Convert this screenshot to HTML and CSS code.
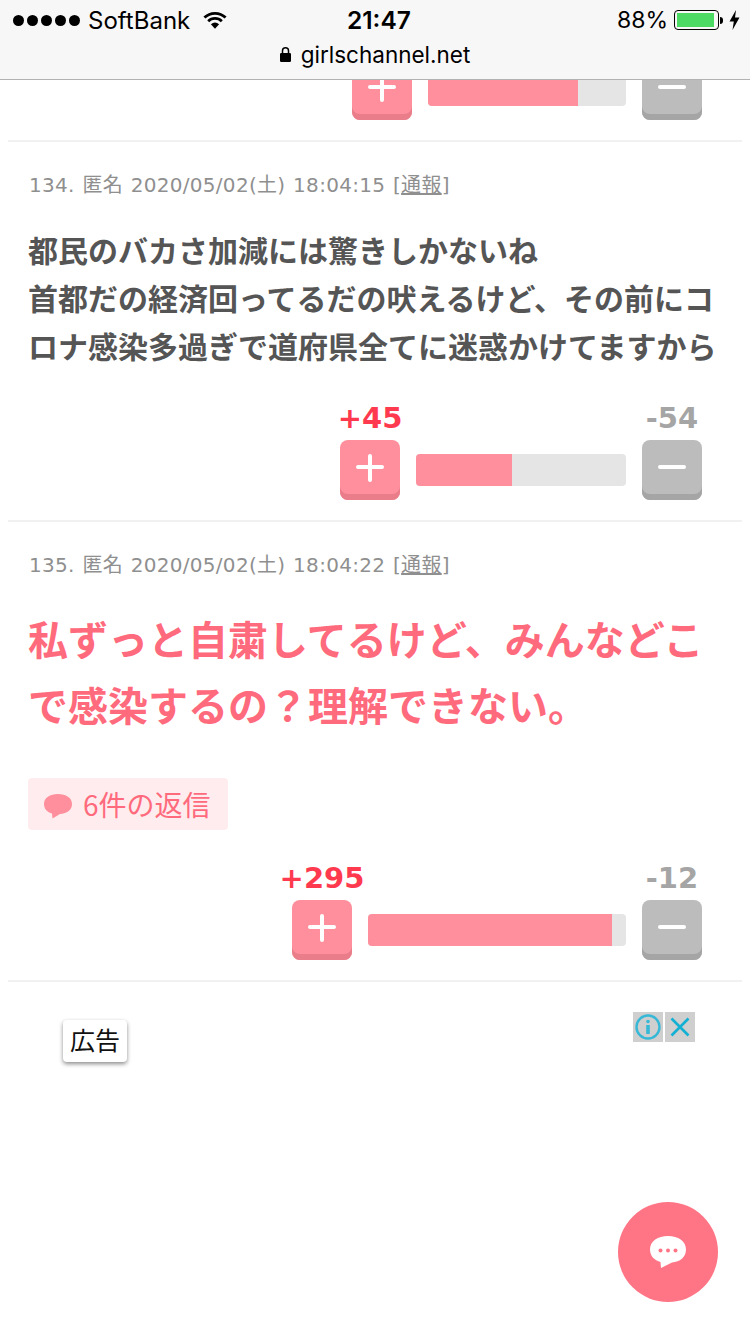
FILE: index.html
```html
<!DOCTYPE html>
<html lang="ja">
<head>
<meta charset="utf-8">
<title>girlschannel.net</title>
<link rel="stylesheet" href="styles.css">
</head>
<body>
<header class="chrome">
  <div class="status">
    <div class="status-left">
      <span class="dots"><i></i><i></i><i></i><i></i><i></i></span>
      <span class="carrier">SoftBank</span>
      <svg class="wifi" width="24" height="18" viewBox="0 0 24 18"><path d="M1.4 6.6A15.2 15.2 0 0 1 22.6 6.6M5.2 10.2A9.8 9.8 0 0 1 18.8 10.2" fill="none" stroke="#000" stroke-width="2.8"/><path d="M7.9 13.2Q12 9.9 16.1 13.2L12 17.8Z" fill="#000"/></svg>
    </div>
    <div class="time">21:47</div>
    <div class="status-right">
      <span class="pct">88%</span>
      <span class="battery"><span class="battery-level"></span></span>
      <span class="battery-nub"></span>
      <svg class="bolt" width="11" height="20" viewBox="0 0 11 20"><path d="M7 0L0.5 11.5H4.8L3.5 20L10.5 7.6H6Z" fill="#000"/></svg>
    </div>
  </div>
  <div class="url">
    <svg class="lock" width="11" height="15" viewBox="0 0 11 15"><path d="M2.5 6V3.8a3 3 0 0 1 6 0V6" fill="none" stroke="#000" stroke-width="1.5"/><rect x="0" y="6" width="11" height="9" rx="1.2" fill="#000"/></svg>
    <span>girlschannel.net</span>
  </div>
</header>

<main class="page">
  <section class="comment comment-cut">
    <div class="vote">
      <div class="vote-col">
        <button class="btn btn-plus"><span class="plus-h"></span><span class="plus-v"></span></button>
      </div>
      <div class="bar" style="width:198px"><div class="bar-fill" style="width:150px"></div></div>
      <div class="vote-col">
        <button class="btn btn-minus"><span class="plus-h"></span></button>
      </div>
    </div>
  </section>

  <section class="comment">
    <p class="meta">134. 匿名 2020/05/02(土) 18:04:15 [<span class="report">通報</span>]</p>
    <p class="body">都民のバカさ加減には驚きしかないね<br>首都だの経済回ってるだの吠えるけど、その前にコロナ感染多過ぎで道府県全てに迷惑かけてますから</p>
    <div class="vote vote-spaced">
      <div class="vote-col">
        <span class="count count-plus">+45</span>
        <button class="btn btn-plus"><span class="plus-h"></span><span class="plus-v"></span></button>
      </div>
      <div class="bar" style="width:210px"><div class="bar-fill" style="width:96px"></div></div>
      <div class="vote-col">
        <span class="count count-minus">-54</span>
        <button class="btn btn-minus"><span class="plus-h"></span></button>
      </div>
    </div>
  </section>

  <section class="comment">
    <p class="meta">135. 匿名 2020/05/02(土) 18:04:22 [<span class="report">通報</span>]</p>
    <p class="body body-large">私ずっと自粛してるけど、みんなどこで感染するの？理解できない。</p>
    <div class="replies">
      <svg class="reply-icon" width="28" height="25" viewBox="0 0 28 25"><path d="M14 0C6 0 0 3.800 0 10C0 15 3.500 18.500 8 19.500L8.500 24.500L16 20C23 19.500 28 16 28 10C28 3.800 22 0 14 0Z" fill="#ff8f9c"/></svg>
      <span>6件の返信</span>
    </div>
    <div class="vote vote-spaced">
      <div class="vote-col">
        <span class="count count-plus">+295</span>
        <button class="btn btn-plus"><span class="plus-h"></span><span class="plus-v"></span></button>
      </div>
      <div class="bar" style="width:258px"><div class="bar-fill" style="width:244px"></div></div>
      <div class="vote-col">
        <span class="count count-minus">-12</span>
        <button class="btn btn-minus"><span class="plus-h"></span></button>
      </div>
    </div>
  </section>

  <aside class="ad">
    <span class="ad-label">広告</span>
    <div class="ad-icons">
      <span class="ad-icon"><svg width="30" height="30" viewBox="0 0 30 30"><circle cx="15" cy="15" r="11.500" fill="none" stroke="#36b8d6" stroke-width="2.400"/><circle cx="15" cy="9.500" r="1.800" fill="#36b8d6"/><rect x="13.200" y="13" width="3.600" height="9" fill="#36b8d6"/></svg></span>
      <span class="ad-icon"><svg width="30" height="30" viewBox="0 0 30 30"><path d="M6.500 6.500L23.500 23.500M23.500 6.500L6.500 23.500" stroke="#12b0d2" stroke-width="2.600" fill="none"/></svg></span>
    </div>
  </aside>
</main>

<button class="fab">
  <svg width="36" height="32" viewBox="0 0 36 32"><path d="M18 0C8 0 0 5 0 13.500C0 20 4.500 24.500 10.500 26L11 32L22 26.500C30 26 36 21 36 13.500C36 5 28 0 18 0Z" fill="#fff"/><circle cx="10.500" cy="14.500" r="2" fill="#ff7585"/><circle cx="18" cy="14.500" r="2" fill="#ff7585"/><circle cx="25.500" cy="14.500" r="2" fill="#ff7585"/></svg>
</button>
</body>
</html>
```
FILE: styles.css
```css
* { box-sizing: border-box; }
html, body { margin: 0; padding: 0; }
body {
  width: 750px;
  height: 1334px;
  overflow: hidden;
  background: #fff;
  font-family: "DejaVu Sans", "Noto Sans CJK JP", sans-serif;
}
.chrome {
  position: relative;
  z-index: 5;
  height: 80px;
  background: #f8f7f7;
  border-bottom: 1px solid #b2b2b2;
  color: #000;
  font-family: "Inter", "Liberation Sans", sans-serif;
}
.status {
  display: grid;
  grid-template-columns: 334px auto 1fr;
  align-items: center;
  height: 40px;
  padding: 0 10px 0 13px;
}
.status-left { display: flex; align-items: center; }
.dots { display: flex; gap: 3px; }
.dots i { width: 11px; height: 11px; border-radius: 50%; background: #000; }
.carrier { margin-left: 8px; font-size: 24px; }
.wifi { margin-left: 13px; }
.time { font-size: 24.500px; font-weight: 600; }
.status-right { display: flex; align-items: center; justify-content: flex-end; }
.pct { font-size: 23px; margin-right: 6px; }
.battery {
  width: 45px; height: 20px; padding: 2px;
  border: 1px solid #000; border-radius: 4px;
}
.battery-level { display: block; width: 37px; height: 14px; background: #4cd964; }
.battery-nub { width: 3px; height: 7px; margin: 0 6px 0 1px; background: #000; border-radius: 0 3px 3px 0; }
.url {
  display: flex;
  align-items: center;
  justify-content: center;
  gap: 10px;
  height: 29px;
  font-size: 22.500px;
}
.page { padding: 0 8px; }
.comment {
  padding: 29px 0 20px;
  border-bottom: 2px solid #f1f1f1;
}
.comment-cut { margin-top: -20px; padding-top: 0; }
.meta {
  margin: 0;
  padding-left: 21px;
  font-size: 20px;
  letter-spacing: .3px;
  word-spacing: 1px;
  line-height: 28px;
  color: #8f8f8f;
}
.report { text-decoration: underline; }
.body {
  margin: 26px 0 0;
  padding: 0 20px;
  font-family: "Noto Sans CJK JP", sans-serif;
  font-size: 30px;
  font-weight: 700;
  line-height: 48px;
  color: #555;
}
.body-large {
  margin-top: 26px;
  font-size: 40px;
  line-height: 66px;
  color: #ff6a7d;
}
.replies {
  display: inline-flex;
  align-items: center;
  gap: 11px;
  height: 52px;
  margin: 41px 0 0 20px;
  padding: 0 17px 0 16px;
  background: #ffecee;
  border-radius: 4px;
  font-family: "Noto Sans CJK JP", sans-serif;
  font-size: 28px;
  color: #ff6a7d;
}
.reply-icon { margin-top: 5px; }
.vote {
  display: flex;
  justify-content: flex-end;
  align-items: flex-end;
  gap: 16px;
  padding-right: 40px;
}
.vote-spaced { margin-top: 30px; }
.body + .vote-spaced { margin-top: 31px; }
.vote-col { display: flex; flex-direction: column; align-items: center; width: 60px; }
.count {
  height: 36px;
  margin-bottom: 4px;
  font-size: 29px;
  font-weight: 700;
  line-height: 36px;
  white-space: nowrap;
}
.count-plus { color: #ff3a4e; }
.count-minus { color: #a5a5a5; }
.btn {
  display: flex;
  align-items: center;
  justify-content: center;
  position: relative;
  width: 60px;
  height: 60px;
  padding: 0;
  border: 0;
  border-radius: 8px;
}
.btn-plus { background: #ff8f9c; box-shadow: inset 0 -6px 0 #e97e8a; }
.btn-minus { background: #bcbcbc; box-shadow: inset 0 -6px 0 #a5a5a5; }
.plus-h { width: 28px; height: 4px; margin-bottom: 6px; background: #fff; border-radius: 2px; }
.plus-v { position: absolute; left: 28px; top: 14px; width: 4px; height: 28px; background: #fff; border-radius: 2px; }
.bar {
  height: 32px;
  margin-bottom: 14px;
  background: #e5e5e5;
  border-radius: 4px;
  overflow: hidden;
}
.bar-fill { height: 100%; background: #ff8f9c; }
.ad { position: relative; height: 300px; }
.ad-label {
  position: absolute;
  left: 55px;
  top: 38px;
  padding: 0 7px;
  height: 42px;
  background: #fff;
  border-radius: 4px;
  box-shadow: 0 2px 4px rgba(0, 0, 0, .45);
  font-family: "Noto Sans CJK JP", sans-serif;
  font-size: 25px;
  line-height: 39px;
  color: #111;
}
.ad-icons { position: absolute; left: 625px; top: 30px; display: flex; gap: 2px; }
.ad-icon { display: block; width: 30px; height: 30px; background: #cfcfcf; }
.ad-icon svg { display: block; }
.fab {
  position: fixed;
  left: 618px;
  top: 1202px;
  display: flex;
  align-items: center;
  justify-content: center;
  width: 100px;
  height: 100px;
  padding: 0;
  border: 0;
  border-radius: 50%;
  background: #ff7585;
}
```
